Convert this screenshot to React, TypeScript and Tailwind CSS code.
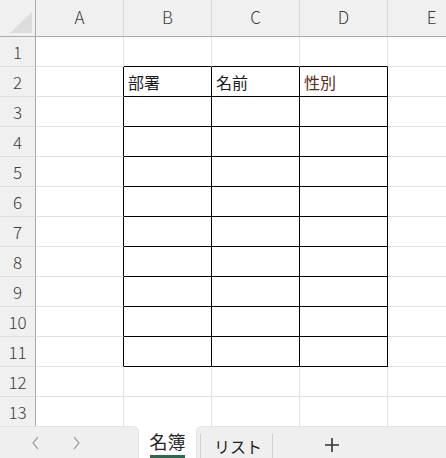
const cols = ['A', 'B', 'C', 'D', 'E'];
const rows = Array.from({ length: 13 }, (_, i) => i + 1);

const headerText: Record<string, string> = { B: '部署', C: '名前', D: '性別' };

const inBox = (col: string, row: number) => ['B', 'C', 'D'].includes(col) && row >= 2 && row <= 11;

const Cell = ({ col, row }: { col: string; row: number }) => {
  const boxed = inBox(col, row);
  const leftOfBox = col === 'A' && row >= 2 && row <= 11;
  const aboveBox = row === 1 && ['B', 'C', 'D'].includes(col);
  const right = boxed || leftOfBox ? 'border-r-black' : 'border-r-[#e1e1e1]';
  const bottom = boxed || aboveBox ? 'border-b-black' : 'border-b-[#e1e1e1]';
  const text = row === 2 ? headerText[col] : undefined;
  return (
    <div className={`w-[88px] shrink-0 h-full border-r border-b ${right} ${bottom} flex items-center pl-[4px]`}>
      {text && (
        <span className={`text-[16px] leading-none ${col === 'D' ? 'text-[#5e2812]' : 'text-[#1a1a1a]'}`}>{text}</span>
      )}
    </div>
  );
};

export default function App() {
  return (
    <div
      className="w-[446px] h-[458px] bg-white overflow-hidden flex flex-col"
      style={{ fontFamily: '"Noto Sans CJK JP", "Noto Sans", sans-serif' }}
    >
      <div className="flex-1 overflow-hidden">
        <div className="flex h-[37px] bg-[#f0f0f0]">
          <div className="w-[36px] shrink-0 h-full border-r border-b border-[#a9a9a9] relative">
            <svg width="36" height="37" className="absolute left-0 top-0">
              <polygon points="32,12 32,33 10,33" fill="#dcdcdc" />
            </svg>
          </div>
          {cols.map((c) => (
            <div
              key={c}
              className="w-[88px] shrink-0 h-full border-r border-r-[#d9d9d9] border-b border-b-[#a9a9a9] flex items-center justify-center text-[17px] font-light text-[#3c3c3c] pb-[2px]"
            >
              {c}
            </div>
          ))}
        </div>
        {rows.map((r) => (
          <div key={r} className="flex h-[30px]">
            <div className="w-[36px] shrink-0 h-full bg-[#f0f0f0] border-r border-r-[#a9a9a9] border-b border-b-[#dcdcdc] flex items-center justify-center text-[17px] font-light text-[#3c3c3c]">
              {r}
            </div>
            {cols.map((c) => (
              <Cell key={c} col={c} row={r} />
            ))}
          </div>
        ))}
      </div>

      <div className="h-[32px] shrink-0 flex bg-white">
        <div className="w-[139px] shrink-0 bg-[#efefef] border-t border-r border-[#e3e3e3] rounded-tr-[6px] flex items-center">
          <svg width="10" height="16" viewBox="0 0 10 16" className="ml-[31px]">
            <polyline points="7,2 2,8 7,14" fill="none" stroke="#a0a0a0" strokeWidth="1.2" />
          </svg>
          <svg width="10" height="16" viewBox="0 0 10 16" className="ml-[30px]">
            <polyline points="3,2 8,8 3,14" fill="none" stroke="#a0a0a0" strokeWidth="1.2" />
          </svg>
        </div>
        <div className="w-[57px] shrink-0 flex flex-col items-center">
          <span className="text-[18px] leading-none text-[#222] mt-[6px]">名簿</span>
          <div className="mt-auto w-[35px] h-[3px] bg-[#1e7145]" />
        </div>
        <div className="flex-1 bg-[#efefef] border-t border-l border-[#e3e3e3] rounded-tl-[6px] flex items-end">
          <div className="ml-[3px] h-[24px] w-px bg-[#cfcfcf]" />
          <div className="w-[71px] h-full flex items-center justify-center pt-[6px] pl-[3px]">
            <span className="text-[16px] leading-none text-[#222]">リスト</span>
          </div>
          <div className="h-[24px] w-px bg-[#cfcfcf]" />
          <div className="w-[118px] h-full flex items-center justify-center pt-[4px]">
            <svg width="16" height="16" viewBox="0 0 16 16">
              <path d="M8 1v14M1 8h14" stroke="#333" strokeWidth="1.6" />
            </svg>
          </div>
        </div>
      </div>
    </div>
  );
}
